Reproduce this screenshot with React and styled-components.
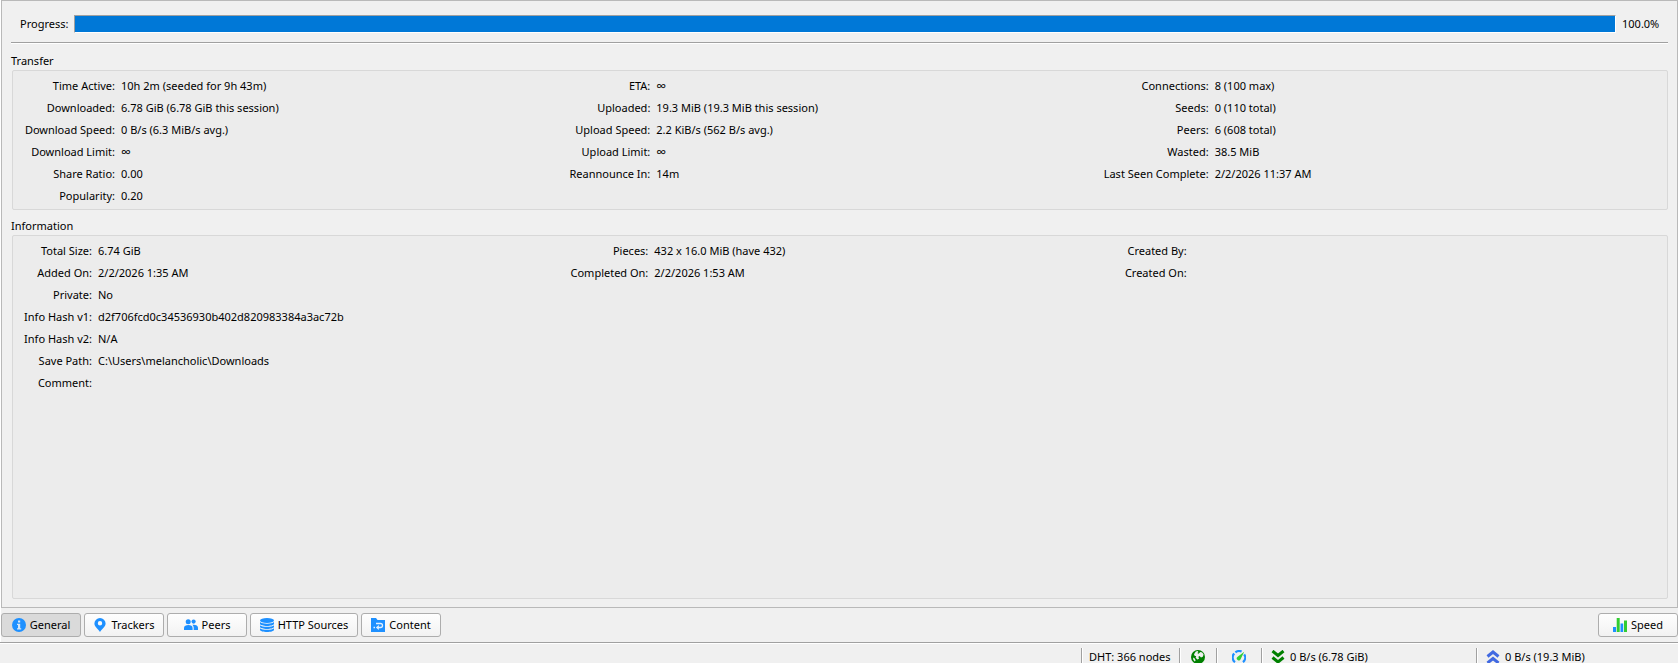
import React from "react";
import styled, { createGlobalStyle } from "styled-components";

const GlobalStyle = createGlobalStyle`
  * { box-sizing: border-box; }
  html, body { margin: 0; padding: 0; background: #f0f0f0; }
  body, button {
    font-family: "Noto Sans", "Open Sans", sans-serif;
    font-size: 11px;
    line-height: 16px;
    color: #000;
  }
`;

const Window = styled.div`
  display: flex;
  flex-direction: column;
  height: 100vh;
  overflow: hidden;
  background: #f0f0f0;
`;

const Properties = styled.div`
  flex: 1;
  display: flex;
  flex-direction: column;
  border-left: 1px solid #fff;
`;

const Pane = styled.main`
  flex: 1;
  display: flex;
  flex-direction: column;
  padding: 0 9px 8px;
  border: 1px solid #b9b9b9;
`;

const ProgressRow = styled.div`
  display: flex;
  align-items: center;
  height: 42px;
  margin-bottom: 2px;
  padding: 4px 9px 0;
  border-bottom: 1px solid #a0a0a0;
  box-shadow: 0 1px 0 #fff;
`;

const ProgressLabel = styled.label`
  width: 54px;
`;

const ProgressBar = styled.progress`
  flex: 1;
  min-width: 0;
  height: 18px;
  appearance: none;
  border: 1px solid;
  border-color: #a0a0a0 #fff #fff #a0a0a0;
  &::-webkit-progress-bar { background: #e6e6e6; }
  &::-webkit-progress-value { background: #0078d7; }
`;

const Percent = styled.output`
  width: 43px;
  padding-left: 6px;
`;

const Group = styled.section`
  display: flex;
  flex-direction: column;
  flex: ${(p) => (p.$grow ? 1 : "none")};
`;

const GroupTitle = styled.h2`
  margin: 0;
  padding: 8px 0 1px;
  font-size: 11px;
  font-weight: 400;
  line-height: 16px;
`;

const GroupBox = styled.div`
  flex: 1;
  display: grid;
  grid-template-columns: ${(p) => p.$columns};
  align-items: start;
  margin-left: 1px;
  padding: 4px 10px 2px;
  background: #ececec;
  border: 1px solid #d8d8d8;
  border-radius: 2px;
`;

const Fields = styled.dl`
  display: grid;
  grid-template-columns: ${(p) => p.$label}px 1fr;
  column-gap: 6px;
  margin: 0;
  line-height: 22px;
  white-space: nowrap;
`;

const Term = styled.dt`
  display: flex;
  justify-content: flex-end;
`;

const Value = styled.dd`
  height: 22px;
  margin: 0;
  font-size: ${(p) => (p.$symbol ? 14 : 11)}px;
`;

const TabBar = styled.nav`
  display: flex;
  gap: 3px;
  padding: 5px 0;
`;

const TabButton = styled.button`
  display: flex;
  align-items: center;
  justify-content: center;
  gap: 4px;
  width: ${(p) => (p.$wide ? 108 : 80)}px;
  height: 24px;
  margin-left: ${(p) => (p.$end ? "auto" : 0)};
  padding: 0;
  white-space: nowrap;
  border: 1px solid #adadad;
  border-radius: 3px;
  background: ${(p) => (p.$active ? "#dadada" : "linear-gradient(#fefefe, #f2f2f2)")};
  svg { flex: none; }
`;

const StatusBar = styled.footer`
  display: flex;
  justify-content: flex-end;
  height: 21px;
  padding-top: 5px;
  border-top: 1px solid #a0a0a0;
  box-shadow: inset 0 1px 0 #fff;
  overflow: hidden;
`;

const StatusCell = styled.div`
  flex: none;
  display: flex;
  align-items: center;
  justify-content: ${(p) => (p.$center ? "center" : "flex-start")};
  gap: 5px;
  width: ${(p) => p.$width}px;
  height: 18px;
  padding: ${(p) => (p.$center ? "0" : p.$icon ? "0 0 0 9px" : "0 0 0 7px")};
  border-left: 1px solid #a0a0a0;
  box-shadow: inset 1px 0 0 #fff;
  white-space: nowrap;
`;

const Icon = ({ children, label }) => (
  <svg width="14" height="14" viewBox="0 0 14 14" role={label ? "img" : undefined} aria-label={label} aria-hidden={label ? undefined : true}>
    {children}
  </svg>
);

const blue = "#1e90ff";

const InfoIcon = () => (
  <Icon>
    <circle cx="7" cy="7" r="7" fill={blue} />
    <path d="M6 2.600h2.200v1.900H6zM5 5.800h3.200v4.400h1v1.300H5v-1.300h1V7.100H5z" fill="#d4e6f8" />
  </Icon>
);

const PinIcon = () => (
  <Icon>
    <path fillRule="evenodd" d="M7 0a5.600 5.600 0 0 1 5.600 5.600C12.600 8.700 9 11 7 14 5 11 1.400 8.700 1.400 5.600A5.600 5.600 0 0 1 7 0zm0 3a2.200 2.200 0 1 0 0 4.400A2.200 2.200 0 0 0 7 3z" fill={blue} />
  </Icon>
);

const PeersIcon = () => (
  <Icon>
    <g fill={blue}>
      <circle cx="4.200" cy="3.800" r="2.500" />
      <circle cx="9.600" cy="3.600" r="2.100" />
      <path d="M0 12V10c0-2 2-2.900 4.400-2.900S8.600 8 8.600 10v2z" />
      <path d="M8.400 6.800c3.300-.4 5.600.9 5.600 3V12H9.700v-2c0-1.400-.5-2.300-1.300-3.200z" />
    </g>
  </Icon>
);

const DatabaseIcon = () => (
  <Icon>
    <g fill={blue}>
      <ellipse cx="7" cy="2.500" rx="7" ry="2.500" />
      <path d="M0 4c2 2.200 12 2.200 14 0v1.700c0 2.900-14 2.900-14 0zM0 7.200c2 2.200 12 2.200 14 0v1.500c0 2.900-14 2.900-14 0zM0 10.200c2 2.200 12 2.200 14 0v1.500c0 3-14 3-14 0z" />
    </g>
  </Icon>
);

const FolderIcon = () => (
  <Icon>
    <path d="M0 0h5l1.500 2H14v12H0z" fill={blue} />
    <path d="M5 5.500h4.500a2 2 0 0 1 0 4H7" fill="none" stroke="#e2f0ff" strokeWidth="1.300" />
    <path d="M7.800 7v5L4.900 9.500zM2.500 8.800H4v1.400H2.500z" fill="#e2f0ff" />
  </Icon>
);

const ChartIcon = () => (
  <Icon>
    <path d="M0 9h3v5H0zM7.500 5.500h2.700V14H7.500z" fill={blue} />
    <path d="M3.700 0h3v14h-3zM11 2.500h3V14h-3z" fill="#32cd32" />
  </Icon>
);

const GlobeIcon = () => (
  <Icon label="Connection status: online">
    <circle cx="7" cy="7" r="7" fill="#008000" />
    <path d="M4.800 1.400 6.800 1 7.400 2.200 6.200 3 7.600 3.800 9.400 2 11.200 2.600 12.600 4.600 11.800 6.800 10 7.400 8.600 6 7.400 6.800 8 8.800 6.400 9.400 4.600 7.800 5.200 6.200 3.600 5.800 3 4.200zM2 7.600 3.800 8.600 4.600 10.600 3.800 11.600 2.400 10z" fill="#f0f0f0" />
  </Icon>
);

const GaugeIcon = () => (
  <Icon label="Alternative speed limits: off">
    <path d="M3 12.200A6 6 0 0 1 2.200 3.400M3.400 2.400A6 6 0 0 1 9.600 1.600M12.200 4.300A6 6 0 0 1 11 12.200" fill="none" stroke={blue} strokeWidth="2.200" />
    <path d="M12.200 1.800 8.600 9.300a2 2 0 1 1-3.200-2.300z" fill="#32cd32" />
  </Icon>
);

const ChevronsIcon = ({ up }) => (
  <Icon>
    <path
      d={up ? "M1.500 6.500 7 2l5.500 4.500M1.500 13 7 8.500 12.500 13" : "M1.500 1 7 5.500 12.500 1M1.500 7.500 7 12l5.500-4.500"}
      fill="none"
      stroke={up ? "#4169e1" : "#008000"}
      strokeWidth="3"
    />
  </Icon>
);

const transfer = [
  { label: 92, rows: [
    ["Time Active:", "10h 2m (seeded for 9h 43m)"],
    ["Downloaded:", "6.78 GiB (6.78 GiB this session)"],
    ["Download Speed:", "0 B/s (6.3 MiB/s avg.)"],
    ["Download Limit:", "∞"],
    ["Share Ratio:", "0.00"],
    ["Popularity:", "0.20"],
  ] },
  { label: 82, rows: [
    ["ETA:", "∞"],
    ["Uploaded:", "19.3 MiB (19.3 MiB this session)"],
    ["Upload Speed:", "2.2 KiB/s (562 B/s avg.)"],
    ["Upload Limit:", "∞"],
    ["Reannounce In:", "14m"],
  ] },
  { label: 107, rows: [
    ["Connections:", "8 (100 max)"],
    ["Seeds:", "0 (110 total)"],
    ["Peers:", "6 (608 total)"],
    ["Wasted:", "38.5 MiB"],
    ["Last Seen Complete:", "2/2/2026 11:37 AM"],
  ] },
];

const information = [
  { label: 69, rows: [
    ["Total Size:", "6.74 GiB"],
    ["Added On:", "2/2/2026 1:35 AM"],
    ["Private:", "No"],
    ["Info Hash v1:", "d2f706fcd0c34536930b402d820983384a3ac72b"],
    ["Info Hash v2:", "N/A"],
    ["Save Path:", "C:\\Users\\melancholic\\Downloads"],
    ["Comment:", ""],
  ] },
  { label: 82, rows: [
    ["Pieces:", "432 x 16.0 MiB (have 432)"],
    ["Completed On:", "2/2/2026 1:53 AM"],
  ] },
  { label: 63, rows: [
    ["Created By:", ""],
    ["Created On:", ""],
  ] },
];

const tabs = [
  { name: "General", icon: <InfoIcon />, active: true },
  { name: "Trackers", icon: <PinIcon /> },
  { name: "Peers", icon: <PeersIcon /> },
  { name: "HTTP Sources", icon: <DatabaseIcon />, wide: true },
  { name: "Content", icon: <FolderIcon /> },
];

const FieldGroup = ({ title, data, columns, grow }) => (
  <Group $grow={grow}>
    <GroupTitle>{title}</GroupTitle>
    <GroupBox $columns={columns}>
      {data.map((column) => (
        <Fields key={column.rows[0][0]} $label={column.label}>
          {column.rows.map(([term, value]) => (
            <React.Fragment key={term}>
              <Term>{term}</Term>
              <Value $symbol={value === "∞"}>{value}</Value>
            </React.Fragment>
          ))}
        </Fields>
      ))}
    </GroupBox>
  </Group>
);

export default function App() {
  return (
    <Window>
      <GlobalStyle />
      <Properties>
        <Pane>
          <ProgressRow>
            <ProgressLabel htmlFor="progress">Progress:</ProgressLabel>
            <ProgressBar id="progress" value="100" max="100" />
            <Percent htmlFor="progress">100.0%</Percent>
          </ProgressRow>
          <FieldGroup title="Transfer" data={transfer} columns="545fr 533fr 555fr" />
          <FieldGroup title="Information" data={information} columns="543fr 557fr 533fr" grow />
        </Pane>
        <TabBar>
          {tabs.map((tab) => (
            <TabButton key={tab.name} type="button" $active={tab.active} $wide={tab.wide} aria-pressed={!!tab.active}>
              {tab.icon}
              {tab.name}
            </TabButton>
          ))}
          <TabButton type="button" $end>
            <ChartIcon />
            Speed
          </TabButton>
        </TabBar>
      </Properties>
      <StatusBar>
        <StatusCell $width={98}>DHT: 366 nodes</StatusCell>
        <StatusCell $width={37} $center><GlobeIcon /></StatusCell>
        <StatusCell $width={45} $center><GaugeIcon /></StatusCell>
        <StatusCell $width={215} $icon><ChevronsIcon />0 B/s (6.78 GiB)</StatusCell>
        <StatusCell $width={202} $icon><ChevronsIcon up />0 B/s (19.3 MiB)</StatusCell>
      </StatusBar>
    </Window>
  );
}
